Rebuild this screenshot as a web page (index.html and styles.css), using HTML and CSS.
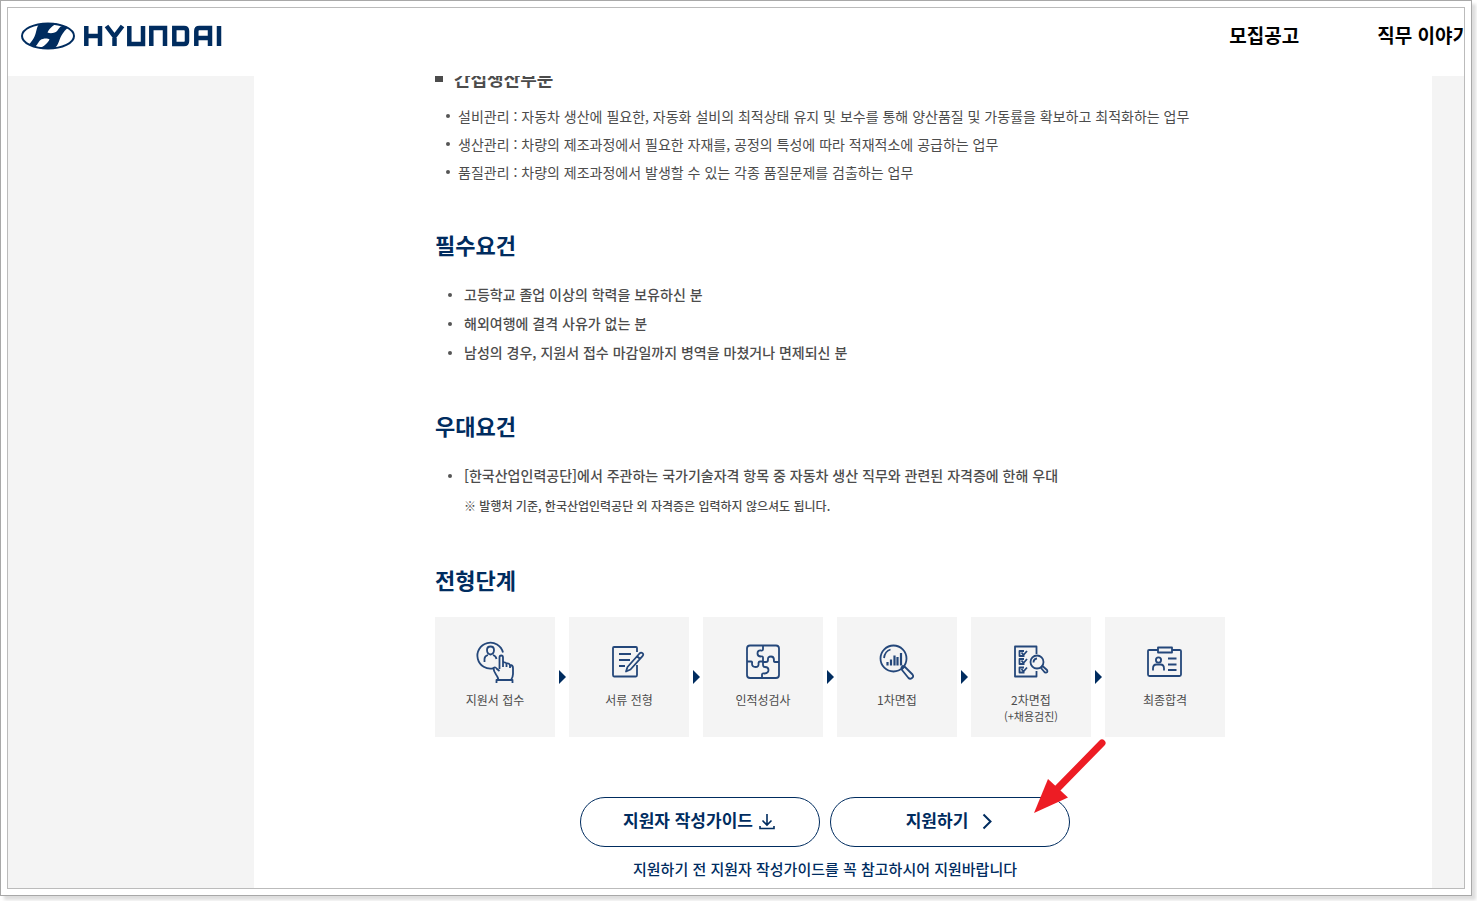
FILE: index.html
```html
<!DOCTYPE html>
<html lang="ko">
<head>
<meta charset="utf-8">
<title>현대자동차 채용</title>
<link rel="stylesheet" href="styles.css">
</head>
<body>
<div class="frame">
<div class="viewport">
  <header class="header">
    <a class="brand" href="#" aria-label="HYUNDAI">
      <svg class="brand-mark" viewBox="0 0 202 28" aria-hidden="true">
        <ellipse cx="27" cy="14" rx="26" ry="12.6" fill="none" stroke="#002c5f" stroke-width="2"/>
        <path d="M18.500 2C24 .8 31 .6 36.500 1.500C32 3 28 7 26.500 10.500C28.500 11.500 33 11.500 35.500 9.500C38 7.500 38 4.500 41.500 4Q44.500 3.600 47 5.500C42 10 40 14 38.500 18C37 22 36 25.200 32.500 26.200C28 27.300 23 27 18 26.300C23 24.500 27 21 28.500 17.500C27 16 22 16 19.500 18C17 20 16.500 23.500 14 24.300Q11.500 25 8 22.500C12.500 17.500 14 14 15 10C16 6 16.500 3.500 18.500 2Z" fill="#002c5f"/>
        <path d="M65.300 4V24M79 4V24M65.300 14H79M85.500 4L93.500 14.500L101.500 4M93.500 13V24M108.300 4V22H122V4M130.300 24V6H144V24M153.300 6V22H163Q166 22 166 19V9Q166 6 163 6ZM175.300 24V9Q175.300 6 178.300 6H189V24M175.300 16H189M198 4V24" fill="none" stroke="#002c5f" stroke-width="4.500"/>
      </svg>
    </a>
    <nav class="nav" aria-label="주 메뉴">
      <a href="#">모집공고</a>
      <a href="#">직무 이야기</a>
    </nav>
  </header>

  <main class="page">
    <div class="content">
      <h3 class="subheading">간접생산부문</h3>
      <ul class="duties">
        <li>설비관리 : 자동차 생산에 필요한, 자동화 설비의 최적상태 유지 및 보수를 통해 양산품질 및 가동률을 확보하고 최적화하는 업무</li>
        <li>생산관리 : 차량의 제조과정에서 필요한 자재를, 공정의 특성에 따라 적재적소에 공급하는 업무</li>
        <li>품질관리 : 차량의 제조과정에서 발생할 수 있는 각종 품질문제를 검출하는 업무</li>
      </ul>

      <section class="section">
        <h2>필수요건</h2>
        <ul class="terms">
          <li>고등학교 졸업 이상의 학력을 보유하신 분</li>
          <li>해외여행에 결격 사유가 없는 분</li>
          <li>남성의 경우, 지원서 접수 마감일까지 병역을 마쳤거나 면제되신 분</li>
        </ul>
      </section>

      <section class="section">
        <h2>우대요건</h2>
        <ul class="terms">
          <li>[한국산업인력공단]에서 주관하는 국가기술자격 항목 중 자동차 생산 직무와 관련된 자격증에 한해 우대</li>
        </ul>
        <p class="remark">※ 발행처 기준, 한국산업인력공단 외 자격증은 입력하지 않으셔도 됩니다.</p>
      </section>

      <section class="section">
        <h2>전형단계</h2>
        <ol class="steps">
          <li>
            <svg class="icon" viewBox="0 0 48 48" aria-hidden="true">
              <path d="M22.500 30.300A13 13 0 1 1 32 14.500"/>
              <path d="M19.500 8.500Q23 8.500 23 12Q23 16 19.500 16.500Q16 16 16 12Q16 8.500 19.500 8.500M13.500 24V21Q13.500 18 17 17M22 17Q25 18 25.500 21"/>
              <path d="M28.500 31V19.500Q28.500 17.500 30.200 17.500Q32 17.500 32 19.500V29M32 24.500Q35.500 23.500 35.500 27V29M35.500 25.500Q39 25 39 28V30M39 27Q42 27 42 30V36Q42 39 40 42H27.500Q27 39 25 36.500Q22.500 33 22.500 30Q24.500 28.500 26 31L28.500 33M25.500 45V42H41.500V45"/>
            </svg>
            <span>지원서 접수</span>
          </li>
          <li>
            <svg class="icon" viewBox="0 0 48 48" aria-hidden="true">
              <path d="M32 14V10Q32 9 31 9H9Q8 9 8 10V37Q8 38.500 9 38.500H31Q32 38.500 32 37V27M14 16H26M14 22H25M14 28H20"/>
              <path d="M34.500 15.500Q36 14 37.500 15.200Q39 16.500 37.500 18.200L25.500 31.500L21 33.500L22.500 29ZM32 18L35 21"/>
            </svg>
            <span>서류 전형</span>
          </li>
          <li>
            <svg class="icon" viewBox="0 0 48 48" aria-hidden="true">
              <path d="M24 7.500H11Q8 7.500 8 10.500V23.500H12Q13.500 23.500 13 25.500Q13 29 16.500 29Q20 29 19.500 25.500Q19.500 23.500 21 23.500H24V19.500Q24 18 22 18.500Q18.500 18.500 18.500 15.500Q18.500 12 22 12.500Q24 13 24 11ZM24 7.500H37Q40 7.500 40 10.500V24H36Q34.500 24 35 22Q35 18.500 32 18.500Q28.500 18.500 29 22Q29 24 27 24H24M8 23.500V37Q8 40 11 40H23V36.500Q23 35 25.500 35.500Q29.500 35 29.500 32Q29.500 29 26 29Q24 29 24 27V23.500M40 24V37Q40 40 37 40H23"/>
            </svg>
            <span>인적성검사</span>
          </li>
          <li>
            <svg class="icon" viewBox="0 0 48 48" aria-hidden="true">
              <circle cx="20.500" cy="20.500" r="13"/>
              <path d="M11 20Q12 13 17.500 11.500M29 31L31.500 28.500L39.500 36.500Q41 38.500 39 40Q37 41.500 35.500 40L29 32ZM30.500 27.500L28 30"/>
              <path class="bars" d="M14.500 27.500V24M18 27.500V21.500M21.500 27.500V17.500M24.500 27.500V19M28 27.500V15"/>
            </svg>
            <span>1차면접</span>
          </li>
          <li>
            <svg class="icon" viewBox="0 0 48 48" aria-hidden="true">
              <path d="M29.500 16V8.500H8V38.500H29.500V33M17 13H12.500V18H17.500M17 21H12.500V26H17.500M17 29.500H12.500V34.500H17.500M14.500 14.500L16.500 17L20 13M14.500 22.500L16.500 25L20 21M14.500 31L16.500 33.500L20 29.500"/>
              <circle cx="30" cy="24" r="6.500"/><path d="M26.500 24.500Q26.500 21 30 20.500M34 30L35.500 28L40 32Q41 34 39.500 34.500Q38 35 37 33.500Z"/>
            </svg>
            <span>2차면접</span>
            <small>(+채용검진)</small>
          </li>
          <li>
            <svg class="icon" viewBox="0 0 48 48" aria-hidden="true">
              <path d="M17 12H8Q7 12 7 13V36.500Q7 38 8.500 38H38.500Q40 38 40 36.500V13Q40 12 38.500 12H31M17 9.500H31V14.500H17Z"/>
              <circle cx="17.500" cy="22" r="2.600"/><path d="M12 32.500V30.500Q12 26.500 15.500 26.500H19.500Q23 26.500 23 30.500V32.500M27 20.500H35.500M27 26.500H35.500M27 32H35.500"/>
            </svg>
            <span>최종합격</span>
          </li>
        </ol>
      </section>

      <div class="closing">
        <div class="actions">
          <button class="pill" type="button">지원자 작성가이드
            <svg class="download" viewBox="0 0 16 18" aria-hidden="true"><path d="M8 2V12.500M3.500 8.500L8 13L12.500 8.500M1 14V16.500H15V14"/></svg>
          </button>
          <div class="apply">
            <button class="pill pill-apply" type="button">지원하기
              <svg class="chevron" viewBox="0 0 10 18" aria-hidden="true"><path d="M1.500 2.500L8.500 9.500L1.500 16.500"/></svg>
            </button>
            <svg class="pointer" viewBox="0 0 74 78" aria-hidden="true"><path d="M68 6L22 53" stroke="#ed1c24" stroke-width="7" stroke-linecap="round"/><path d="M0 76L14 42L34 60.500Z" fill="#ed1c24"/></svg>
          </div>
        </div>
        <p class="notice">지원하기 전 지원자 작성가이드를 꼭 참고하시어 지원바랍니다</p>
      </div>
    </div>
  </main>
</div>
</div>
</body>
</html>
```
FILE: styles.css
```css
* {
  box-sizing: border-box;
}

body {
  min-height: 100vh;
  margin: 0;
  padding: 0 5px 5px 0;
  overflow: hidden;
  background: #fff;
  color: #4c4c4c;
  font-family: "Noto Sans CJK KR", "Noto Sans", sans-serif;
  font-size: 14px;
}

h2, h3, p, ul, ol {
  margin: 0;
  padding: 0;
}

ul, ol {
  list-style: none;
}

.frame {
  height: calc(100vh - 5px);
  padding: 6px;
  border: 1px solid #a8a8a8;
  box-shadow: 4px 4px 3px #dedede;
}

.viewport {
  height: 100%;
  overflow: hidden;
  border: 1px solid #bbb;
  background: #f4f4f4;
}

.header {
  position: relative;
  z-index: 1;
  display: flex;
  align-items: flex-start;
  justify-content: space-between;
  height: 68px;
  padding: 14px 0 0 13px;
  overflow: hidden;
  background: #fff;
}

.brand-mark {
  display: block;
  width: 202px;
  height: 28px;
}

.nav {
  display: flex;
  gap: 78px;
  margin-right: -6px;
}

.nav a {
  color: #000;
  font-size: 19px;
  font-weight: 700;
  line-height: 26px;
  text-decoration: none;
  white-space: nowrap;
}

.page {
  margin: 0 32px 0 246px;
  padding: 0 181px;
  background: #fff;
}

.content {
  width: 100%;
  max-width: 790px;
  padding-bottom: 20px;
}

.subheading {
  display: flex;
  align-items: center;
  gap: 11px;
  margin-top: -12px;
  font-size: 18px;
  line-height: 28px;
}

.subheading::before {
  width: 8px;
  height: 8px;
  background: #4c4c4c;
  content: "";
}

.duties {
  padding: 10px 0 0 11px;
}

.duties li,
.terms li {
  display: flex;
  align-items: center;
  white-space: nowrap;
}

.duties li {
  gap: 8px;
  line-height: 28px;
}

.duties li::before,
.terms li::before {
  width: 4px;
  height: 4px;
  border-radius: 50%;
  background: #555;
  content: "";
}

.section {
  padding-top: 42px;
}

.section h2 {
  color: #002c5f;
  font-size: 22px;
  font-weight: 700;
  line-height: 32px;
}

.terms {
  padding: 20px 0 0 13px;
}

.terms li {
  gap: 12px;
  font-weight: 500;
  line-height: 29px;
}

.remark {
  padding-left: 29px;
  font-size: 12px;
  font-weight: 500;
  line-height: 31px;
}

.steps {
  display: flex;
  gap: 14px;
  padding-top: 22px;
}

.steps li {
  position: relative;
  display: flex;
  flex: 1;
  flex-direction: column;
  align-items: center;
  height: 120px;
  padding-top: 21px;
  background: #f4f4f4;
  font-size: 12px;
  line-height: 16px;
}

.steps li:not(:last-child)::after {
  position: absolute;
  top: 53px;
  right: -11px;
  border-width: 7px 0 7px 7px;
  border-style: solid;
  border-color: transparent transparent transparent #002c5f;
  content: "";
}

.steps small {
  font-size: 11px;
}

.icon {
  width: 48px;
  height: 48px;
  margin-bottom: 6px;
  fill: none;
  stroke: #24477a;
  stroke-width: 1.800;
  stroke-linejoin: round;
}

.icon .bars {
  stroke-width: 2.200;
}

.closing {
  padding: 60px 10px 0 0;
}

.actions {
  display: flex;
  justify-content: center;
  gap: 10px;
}

.apply {
  position: relative;
}

.pill {
  display: flex;
  align-items: center;
  justify-content: center;
  gap: 6px;
  width: 240px;
  height: 50px;
  padding: 0 2px 6px 0;
  border: 1px solid #002c5f;
  border-radius: 25px;
  background: #fff;
  color: #002c5f;
  font: inherit;
  font-size: 17px;
  font-weight: 700;
}

.pill-apply {
  gap: 14px;
}

.pill svg {
  height: 18px;
  margin-top: 4px;
  fill: none;
  stroke: #002c5f;
  stroke-width: 2;
}

.pill .download {
  width: 16px;
  stroke-width: 1.600;
}

.chevron {
  width: 10px;
}

.pointer {
  position: absolute;
  top: -60px;
  right: -38px;
  width: 74px;
  height: 78px;
  fill: none;
}

.notice {
  padding-top: 10px;
  color: #002c5f;
  font-size: 15px;
  font-weight: 500;
  line-height: 24px;
  text-align: center;
}
```
